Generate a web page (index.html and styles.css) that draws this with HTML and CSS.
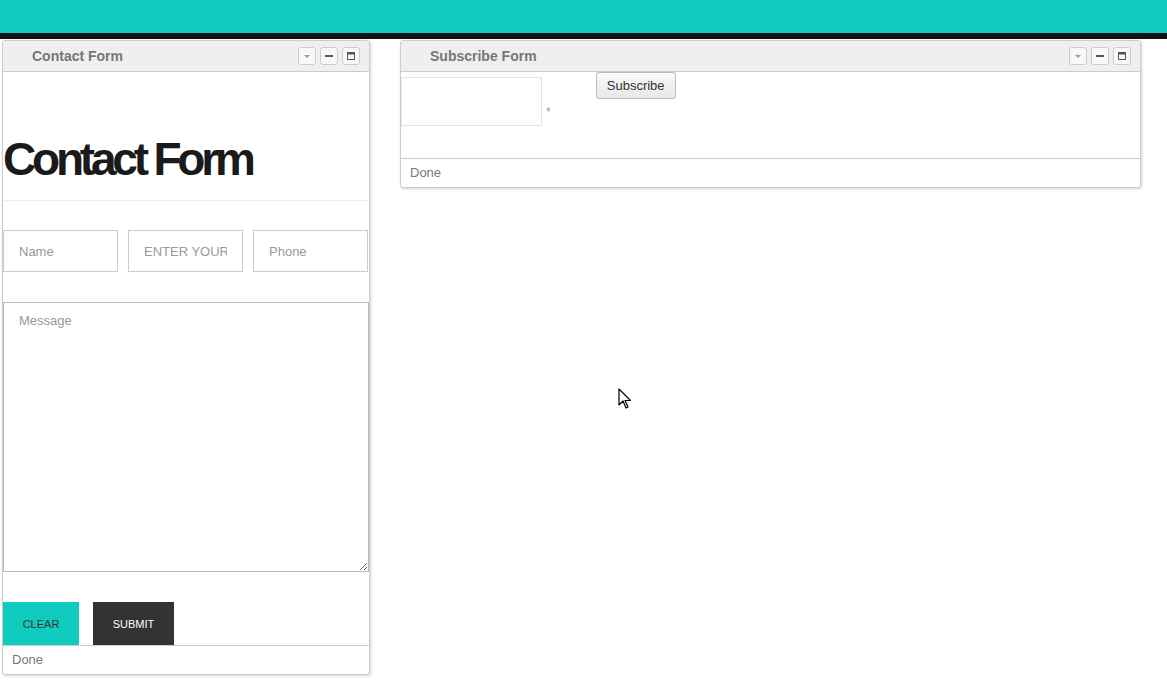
FILE: index.html
```html
<!DOCTYPE html>
<html lang="en">

<head>
    <meta charset="UTF-8">
    <meta name="viewport" content="width=device-width, initial-scale=1.0">
    <title>Forms</title>
    <link rel="stylesheet" href="styles.css">
</head>

<body>
    <div class="topbar"></div>

    <div class="desktop">
        <!-- Ventana del formulario de contacto -->
        <div class="window contact-window">
            <div class="window-head">
                <span class="window-title">Contact Form</span>
                <div class="window-tools">
                    <span class="tool"><svg width="10" height="10" viewBox="0 0 10 10"><path d="M2 4h6L5 7z" fill="#999"/></svg></span>
                    <span class="tool"><svg width="10" height="10" viewBox="0 0 10 10"><rect x="1" y="4" width="8" height="2" fill="#555"/></svg></span>
                    <span class="tool"><svg width="10" height="10" viewBox="0 0 10 10"><rect x="1.5" y="1.5" width="7" height="7" fill="none" stroke="#555"/><rect x="1" y="1" width="8" height="2.5" fill="#555"/></svg></span>
                </div>
            </div>
            <div class="window-body contact-body">
                <h1 class="contact-title">Contact Form</h1>
                <div class="field-row">
                    <input type="text" class="field" placeholder="Name">
                    <input type="text" class="field" placeholder="ENTER YOUR EMAIL">
                    <input type="text" class="field" placeholder="Phone">
                </div>
                <textarea class="message" placeholder="Message"></textarea>
                <div class="button-row">
                    <button class="btn btn-clear">CLEAR</button>
                    <button class="btn btn-submit">SUBMIT</button>
                </div>
            </div>
            <div class="window-foot">Done</div>
        </div>

        <!-- Ventana de suscripcion -->
        <div class="window subscribe-window">
            <div class="window-head">
                <span class="window-title">Subscribe Form</span>
                <div class="window-tools">
                    <span class="tool"><svg width="10" height="10" viewBox="0 0 10 10"><path d="M2 4h6L5 7z" fill="#999"/></svg></span>
                    <span class="tool"><svg width="10" height="10" viewBox="0 0 10 10"><rect x="1" y="4" width="8" height="2" fill="#555"/></svg></span>
                    <span class="tool"><svg width="10" height="10" viewBox="0 0 10 10"><rect x="1.5" y="1.5" width="7" height="7" fill="none" stroke="#555"/><rect x="1" y="1" width="8" height="2.5" fill="#555"/></svg></span>
                </div>
            </div>
            <div class="window-body subscribe-body">
                <input type="text" class="sub-field">
                <span class="required">*</span>
                <button class="sub-btn">Subscribe</button>
            </div>
            <div class="window-foot">Done</div>
        </div>
    </div>

    <svg class="cursor" width="14" height="22" viewBox="0 0 14 22">
        <path d="M1 1v16l4-4 3 7 2-1-3-6.5h5.5z" fill="#fff" stroke="#000" stroke-width="1.2" stroke-linejoin="round"/>
    </svg>
</body>

</html>
```

FILE: styles.css
```css
body {
    font-family: "Liberation Sans", Arial, sans-serif;
    margin: 0;
    padding: 0;
    background-color: #fff;
    width: 1167px;
    height: 682px;
    overflow: hidden;
    position: relative;
}

.topbar {
    height: 33px;
    background-color: #10cbc0;
    border-bottom: 6px solid #111;
}

.desktop {
    display: flex;
    align-items: flex-start;
    padding-top: 1px;
}

.window {
    border: 1px solid #ccc;
    border-radius: 3px;
    background-color: #fff;
    box-shadow: 1px 1px 3px rgba(0, 0, 0, 0.18);
    display: flex;
    flex-direction: column;
}

.contact-window {
    margin-left: 2px;
    width: 366px;
}

.subscribe-window {
    margin-left: 30px;
    width: 739px;
}

.window-head {
    height: 30px;
    background-color: #efefef;
    border-bottom: 1px solid #ccc;
    display: flex;
    align-items: center;
    justify-content: space-between;
    padding: 0 9px 0 29px;
}

.window-title {
    font-weight: bold;
    font-size: 14px;
    color: #777;
}

.window-tools {
    display: flex;
    gap: 4px;
}

.tool {
    width: 16px;
    height: 16px;
    border: 1px solid #ccc;
    border-radius: 3px;
    background-color: #f8f8f8;
    display: flex;
    align-items: center;
    justify-content: center;
}

.window-foot {
    border-top: 1px solid #ccc;
    height: 28px;
    line-height: 27px;
    padding-left: 9px;
    font-size: 13px;
    color: #777;
}

/* formulario de contacto */
.contact-body {
    display: flex;
    flex-direction: column;
}

.contact-title {
    margin: 0;
    padding-top: 58px;
    height: 70px;
    border-bottom: 1px solid #eee;
    font-size: 46px;
    letter-spacing: -4.2px;
    line-height: 58px;
    color: #1a1a1a;
    font-weight: bold;
}

.field-row {
    display: flex;
    gap: 10px;
    padding-top: 29px;
}

.field {
    width: 115px;
    height: 42px;
    box-sizing: border-box;
    border: 1px solid #ccc;
    padding: 0 15px;
    font-family: "Liberation Sans", Arial, sans-serif;
    font-size: 13px;
    color: #333;
    margin: 0;
}

.field::placeholder,
.message::placeholder {
    color: #999;
}

.message {
    margin: 30px 0 0 0;
    width: 366px;
    height: 270px;
    box-sizing: border-box;
    border: 1px solid #bbb;
    padding: 10px 15px;
    font-family: "Liberation Sans", Arial, sans-serif;
    font-size: 13px;
    resize: vertical;
}

.button-row {
    display: flex;
    gap: 14px;
    margin-top: 30px;
}

.btn {
    height: 43px;
    border: none;
    font-family: "Liberation Sans", Arial, sans-serif;
    font-size: 11px;
    padding: 0;
    cursor: pointer;
}

.btn-clear {
    width: 76px;
    background-color: #10cbc0;
    color: #333;
}

.btn-submit {
    width: 81px;
    background-color: #333;
    color: #fff;
}

/* formulario de suscripcion */
.subscribe-body {
    height: 86px;
    display: flex;
    align-items: flex-start;
}

.sub-field {
    margin: 5px 0 0 0;
    width: 141px;
    height: 49px;
    box-sizing: border-box;
    border: 1px solid #e3e3e3;
    padding: 0 8px;
}

.required {
    margin: 33px 0 0 4px;
    font-size: 12px;
    color: #999;
}

.sub-btn {
    margin-left: 45px;
    width: 80px;
    height: 27px;
    border: 1px solid #bbb;
    border-radius: 3px;
    background: linear-gradient(#f9f9f9, #e8e8e8);
    font-family: "Liberation Sans", Arial, sans-serif;
    font-size: 13px;
    color: #333;
    padding: 0 0 1px 0;
}

.cursor {
    position: absolute;
    left: 618px;
    top: 388px;
}
```
